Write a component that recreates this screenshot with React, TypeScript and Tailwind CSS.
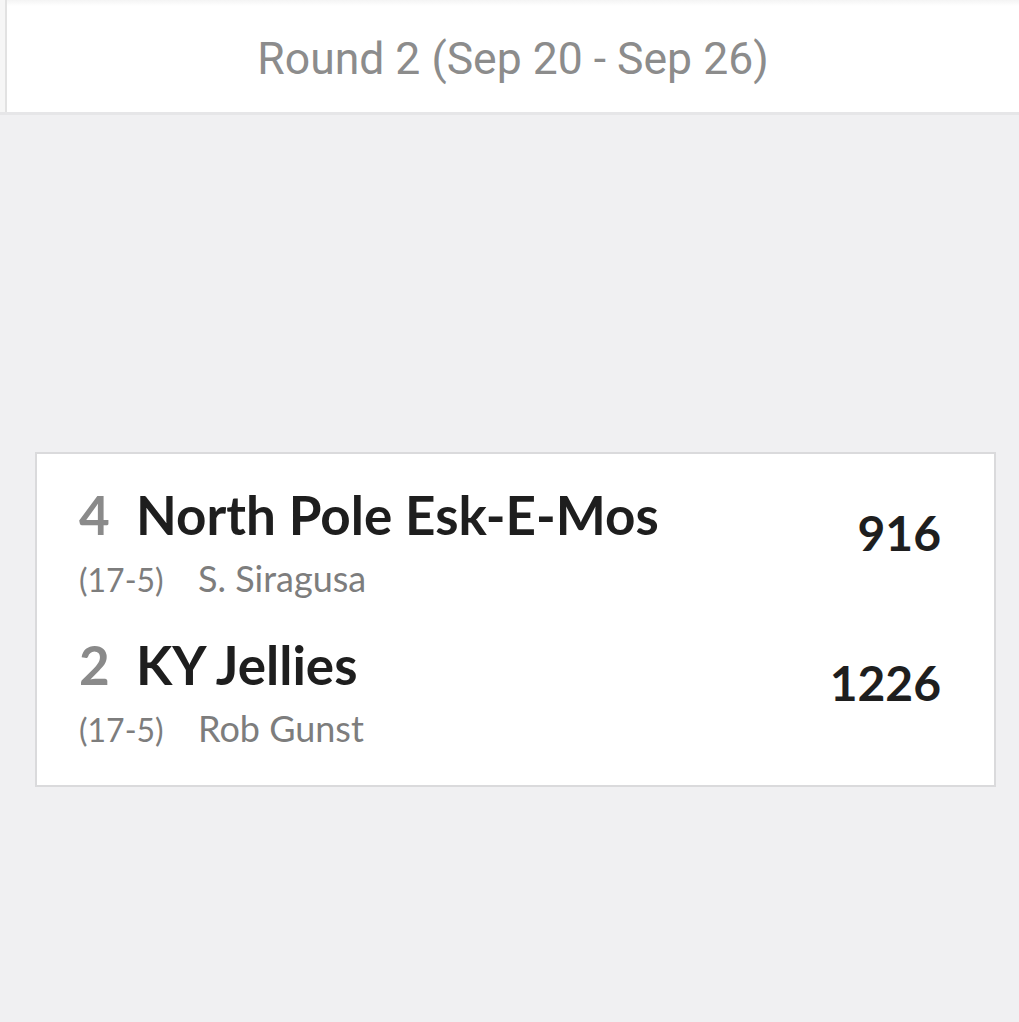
import React from 'react';

type Team = {
  seed: number;
  name: string;
  record: string;
  owner: string;
  score: number;
};

const teams: Team[] = [
  { seed: 4, name: 'North Pole Esk-E-Mos', record: '(17-5)', owner: 'S. Siragusa', score: 916 },
  { seed: 2, name: 'KY Jellies', record: '(17-5)', owner: 'Rob Gunst', score: 1226 },
];

const TeamRow: React.FC<{ team: Team }> = ({ team }) => (
  <div className="flex items-start justify-between">
    <div>
      <div className="flex items-baseline text-[53px] leading-[60px] font-bold">
        <span className="text-[#8a8a8a] w-[57px]">{team.seed}</span>
        <span className="text-[#1e1e1e]">{team.name}</span>
      </div>
      <div className="flex items-baseline h-[40px] leading-[40px] text-[#7d7d7d] mt-[13px]">
        <span className="w-[119px] text-[32px]">{team.record}</span>
        <span className="text-[36px]">{team.owner}</span>
      </div>
    </div>
    <div className="text-[48px] leading-[60px] font-bold text-[#1e1e1e] mt-[18px]">{team.score}</div>
  </div>
);

export default function App() {
  return (
    <div className="min-h-[1022px] bg-[#f0f0f2] font-['Lato',sans-serif]">
      {/* Round header */}
      <div className="flex h-[115px] border-b-[3px] border-[#e6e6e8] bg-white">
        <div className="w-[7px] bg-[#f6f6f6] border-r-2 border-[#e2e2e2]" />
        <div className="flex-1 flex items-center justify-center bg-gradient-to-b from-[#f4f4f4] to-white to-[6px] pt-[7px]">
          <span className="font-['Roboto',sans-serif] text-[44.5px] text-[#8c8c8c]">
            Round 2 (Sep 20 - Sep 26)
          </span>
        </div>
      </div>

      {/* Matchup card */}
      <div className="pt-[337px] pl-[35px] pr-[23px]">
        <div className="bg-white border-2 border-[#dadadc] pl-[42px] pr-[53px] pt-[31px] pb-[37px] flex flex-col gap-[37px]">
          {teams.map((t) => (
            <TeamRow key={t.seed} team={t} />
          ))}
        </div>
      </div>
    </div>
  );
}
